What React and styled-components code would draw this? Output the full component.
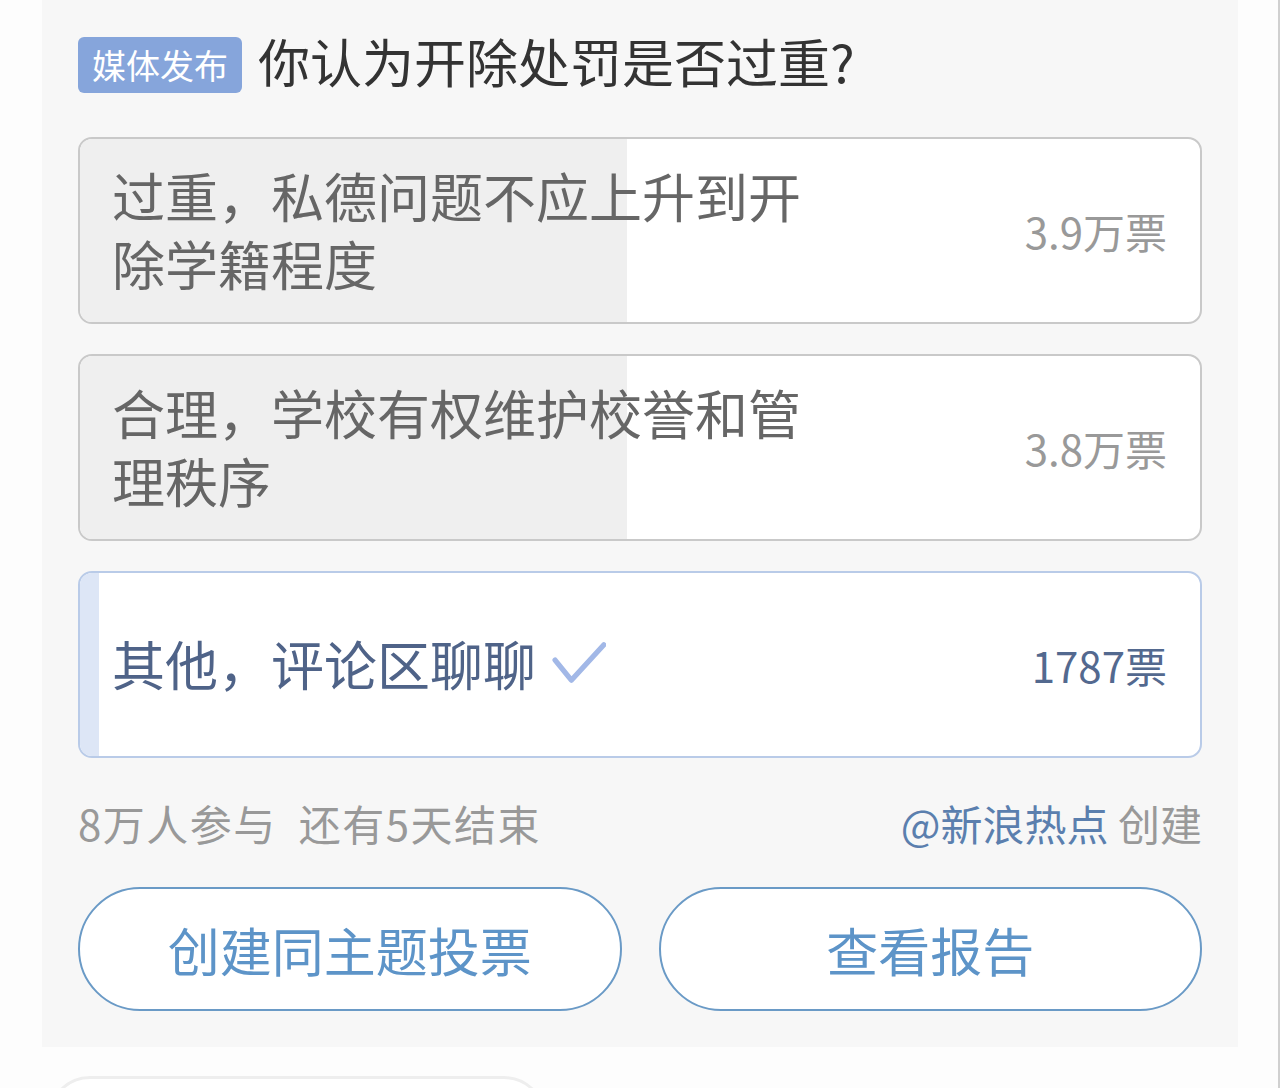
import React from "react";
import styled, { createGlobalStyle } from "styled-components";

const options = [
  { text: "过重，私德问题不应上升到开除学籍程度", votes: "3.9万票", pct: 48.8 },
  { text: "合理，学校有权维护校誉和管理秩序", votes: "3.8万票", pct: 48.8 },
  { text: "其他，评论区聊聊", votes: "1787票", pct: 1.7, chosen: true }
];

export default function App() {
  return (
    <Page>
      <GlobalStyle />
      <Card>
        <Header>
          <Tag>媒体发布</Tag>
          <Title>你认为开除处罚是否过重?</Title>
        </Header>
        <OptionList>
          {options.map(opt => (
            <Option key={opt.text} $chosen={opt.chosen}>
              <Fill $chosen={opt.chosen} style={{ width: `${opt.pct}%` }} />
              <OptionText $chosen={opt.chosen}>
                {opt.text}
                {opt.chosen && (
                  <Check viewBox="0 0 56 46">
                    <path d="M3 20 L20 41 L54 4" />
                  </Check>
                )}
              </OptionText>
              <Votes $chosen={opt.chosen}>{opt.votes}</Votes>
            </Option>
          ))}
        </OptionList>
        <Stats>
          <Meta>8万人参与&nbsp;&nbsp;还有5天结束</Meta>
          <span>
            <Author>@新浪热点</Author> 创建
          </span>
        </Stats>
        <Buttons>
          <PillButton>创建同主题投票</PillButton>
          <PillButton>查看报告</PillButton>
        </Buttons>
      </Card>
      <NextCard />
    </Page>
  );
}

const GlobalStyle = createGlobalStyle`
  body {
    margin: 0;
    background: #fdfdfd;
    overflow: hidden;
    font-family: "Noto Sans CJK SC", "Noto Sans", sans-serif;
  }
`;

const Page = styled.div`
  width: 1280px;
  height: 1088px;
  box-sizing: border-box;
  padding-left: 42px;
  border-right: 2px solid #d0d0d0;
  overflow: hidden;
`;

const Card = styled.div`
  width: 1196px;
  box-sizing: border-box;
  background: #f7f7f7;
  padding: 37px 36px 36px 36px;
`;

const Header = styled.div`
  display: flex;
  align-items: center;
  gap: 16px;
  height: 56px;
`;

const Tag = styled.span`
  background: #86a5db;
  color: #fff;
  font-size: 34px;
  line-height: 56px;
  padding: 0 14px;
  border-radius: 6px;
`;

const Title = styled.h1`
  margin: 0 0 8px;
  font-size: 52px;
  font-weight: 400;
  color: #333;
  line-height: 56px;
`;

const OptionList = styled.div`
  display: flex;
  flex-direction: column;
  gap: 30px;
  margin-top: 44px;
`;

const Option = styled.div`
  position: relative;
  height: 187px;
  box-sizing: border-box;
  display: flex;
  align-items: center;
  justify-content: space-between;
  padding: 0 33px 0 32px;
  background: #fff;
  border: 2px solid ${p => (p.$chosen ? "#b9cbe8" : "#c9c9c9")};
  border-radius: 14px;
  overflow: hidden;
`;

const Fill = styled.div`
  position: absolute;
  left: 0;
  top: 0;
  bottom: 0;
  background: ${p => (p.$chosen ? "#dde6f6" : "#efefef")};
`;

const OptionText = styled.div`
  position: relative;
  max-width: 710px;
  margin-top: -4px;
  font-size: 53px;
  line-height: 68px;
  color: ${p => (p.$chosen ? "#4f6388" : "#666")};
  display: flex;
  align-items: center;
`;

const Check = styled.svg`
  width: 54px;
  height: 44px;
  margin-left: 16px;
  fill: none;
  stroke: #a2b8e7;
  stroke-width: 5.5;
  stroke-linecap: round;
  stroke-linejoin: round;
`;

const Votes = styled.span`
  position: relative;
  font-size: 42px;
  color: ${p => (p.$chosen ? "#53698f" : "#999")};
`;

const Stats = styled.div`
  display: flex;
  justify-content: space-between;
  margin-top: 40px;
  font-size: 42px;
  line-height: 50px;
  color: #999;
`;

const Meta = styled.span`
  letter-spacing: 1.5px;
`;

const Author = styled.span`
  color: #5b7fae;
`;

const Buttons = styled.div`
  display: grid;
  grid-template-columns: 1fr 1fr;
  gap: 37px;
  margin-top: 39px;
`;

const PillButton = styled.button`
  height: 124px;
  background: #fff;
  border: 2px solid #6a9ac6;
  border-radius: 62px;
  color: #5d94c8;
  font-family: "Noto Sans CJK SC", "Noto Sans", sans-serif;
  font-size: 52px;
  cursor: pointer;
`;

const NextCard = styled.div`
  width: 492px;
  height: 80px;
  margin: 29px 0 0 6px;
  background: #fff;
  border: 3px solid #eeeeee;
  border-radius: 42px;
`;
